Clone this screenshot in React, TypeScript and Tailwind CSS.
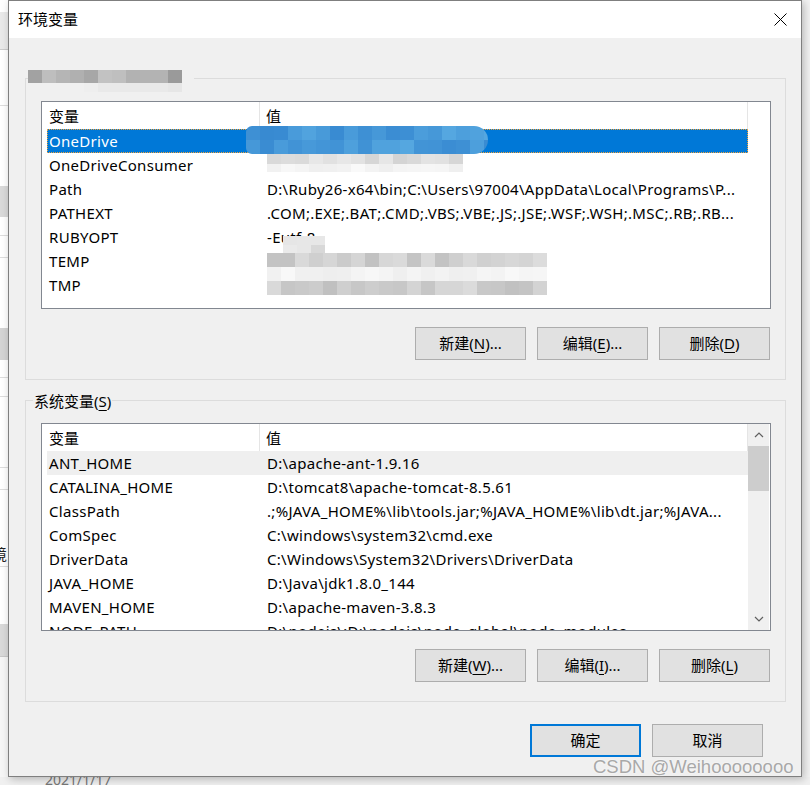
import type { ReactNode } from "react";

type Row = { name: string; value: string };

const userVars: Row[] = [
  { name: "OneDrive", value: "" },
  { name: "OneDriveConsumer", value: "" },
  { name: "Path", value: "D:\\Ruby26-x64\\bin;C:\\Users\\97004\\AppData\\Local\\Programs\\P..." },
  { name: "PATHEXT", value: ".COM;.EXE;.BAT;.CMD;.VBS;.VBE;.JS;.JSE;.WSF;.WSH;.MSC;.RB;.RB..." },
  { name: "RUBYOPT", value: "-Eutf-8" },
  { name: "TEMP", value: "" },
  { name: "TMP", value: "" },
];

const sysVars: Row[] = [
  { name: "ANT_HOME", value: "D:\\apache-ant-1.9.16" },
  { name: "CATALINA_HOME", value: "D:\\tomcat8\\apache-tomcat-8.5.61" },
  { name: "ClassPath", value: ".;%JAVA_HOME%\\lib\\tools.jar;%JAVA_HOME%\\lib\\dt.jar;%JAVA..." },
  { name: "ComSpec", value: "C:\\windows\\system32\\cmd.exe" },
  { name: "DriverData", value: "C:\\Windows\\System32\\Drivers\\DriverData" },
  { name: "JAVA_HOME", value: "D:\\Java\\jdk1.8.0_144" },
  { name: "MAVEN_HOME", value: "D:\\apache-maven-3.8.3" },
  { name: "NODE_PATH", value: "D:\\nodejs\\;D:\\nodejs\\node_global\\node_modules" },
];

// pseudo random 0..1 so the mosaic looks the same every run
const noise = (i: number, j: number) => {
  const n = Math.sin(i * 12.9898 + j * 78.233) * 43758.5453;
  return n - Math.floor(n);
};

const gray = (base: number, spread: number, i: number, j: number) => {
  const v = Math.round(base + (noise(i, j) - 0.5) * spread);
  return `rgb(${v},${v},${v})`;
};

const blue = (i: number, j: number) => {
  const d = Math.round((noise(i + 3, j + 7) - 0.5) * 30);
  return `rgb(${70 + d},${152 + d},${216 + Math.round(d / 2)})`;
};

type MosaicRow = { h: number; color: (i: number) => string };

function Mosaic({ rows, cols, className }: { rows: MosaicRow[]; cols: number; className?: string }) {
  return (
    <div className={"flex flex-col overflow-hidden " + (className ?? "")}>
      {rows.map((r, j) => (
        <div key={j} className="flex" style={{ height: r.h }}>
          {Array.from({ length: cols }).map((_, i) => (
            <div key={i} className="w-[14px] shrink-0 h-full" style={{ background: r.color(i) }} />
          ))}
        </div>
      ))}
    </div>
  );
}

function Btn({ children, primary }: { children: ReactNode; primary?: boolean }) {
  return (
    <div
      className={
        "w-[111px] h-[33px] bg-[#e1e1e1] flex items-center justify-center text-[15px] text-black " +
        (primary ? "border-2 border-[#0078d7]" : "border border-[#adadad]")
      }
    >
      {children}
    </div>
  );
}

const U = ({ c }: { c: string }) => <span className="underline underline-offset-[3px]">{c}</span>;

function Scrollbar() {
  return (
    <div className="w-[21px] h-full bg-[#f0f0f0] flex flex-col">
      <div className="h-[22px] flex items-center justify-center">
        <svg width="10" height="6" viewBox="0 0 10 6">
          <path d="M1 5 L5 1 L9 5" fill="none" stroke="#606060" strokeWidth="1.2" />
        </svg>
      </div>
      <div className="h-[45px] bg-[#cdcdcd]" />
      <div className="flex-1" />
      <div className="h-[22px] flex items-center justify-center">
        <svg width="10" height="6" viewBox="0 0 10 6">
          <path d="M1 1 L5 5 L9 1" fill="none" stroke="#606060" strokeWidth="1.2" />
        </svg>
      </div>
    </div>
  );
}

function VarList({
  rows,
  selected,
  hovered,
  scroll,
  children,
}: {
  rows: Row[];
  selected?: number;
  hovered?: number;
  scroll?: boolean;
  children?: ReactNode;
}) {
  return (
    <div className="relative h-[208px] border border-[#828790] bg-white flex overflow-hidden text-[15px] text-black">
      <div className="flex-1 min-w-0 pl-[5px] flex flex-col">
        <div className="h-[27px] shrink-0 flex">
          <div className="w-[213px] shrink-0 pl-[2px] pt-[1px] border-r border-[#e5e5e5] flex items-center">变量</div>
          <div className="flex-1 pl-[6px] pt-[1px] border-r border-[#e5e5e5] flex items-center">值</div>
        </div>
        {rows.map((r, i) => (
          <div
            key={r.name}
            className={
              "h-[24px] shrink-0 flex items-center whitespace-nowrap tracking-[0.3px] " +
              (i === selected
                ? "bg-[#0078d7] text-white outline-1 outline-dotted outline-[#f2a33a] -outline-offset-1"
                : i === hovered
                ? "bg-[#efefef]"
                : "")
            }
          >
            <div className="w-[213px] shrink-0 pl-[2px]">{r.name}</div>
            <div className="flex-1 min-w-0 pl-[7px] overflow-hidden">{r.value}</div>
          </div>
        ))}
      </div>
      <div className="w-[22px] shrink-0">{scroll && <Scrollbar />}</div>
      {children}
    </div>
  );
}

export default function App() {
  return (
    <div className="w-[810px] h-[785px] overflow-hidden bg-[#f2f2f2] flex flex-col font-['Noto_Sans','Noto_Sans_CJK_SC',sans-serif]">
      <div className="flex h-[777px] shrink-0">
        {/* window behind the dialog */}
        <div className="w-[8px] shrink-0 bg-white flex flex-col overflow-hidden">
          <div className="h-[12px] shrink-0" />
          <div className="h-[38px] shrink-0 bg-[#e9e9e9] border-b border-[#cccccc]" />
          <div className="h-[56px] shrink-0 border-b border-[#dddddd]" />
          <div className="h-[80px] shrink-0" />
          <div className="h-[31px] shrink-0 bg-[#d9d9d9]" />
          <div className="h-[19px] shrink-0 border-b border-[#dddddd]" />
          <div className="h-[22px] shrink-0 border-b border-[#dddddd]" />
          <div className="h-[70px] shrink-0" />
          <div className="h-[32px] shrink-0 bg-[#d4d4d4]" />
          <div className="h-[18px] shrink-0 border-b border-[#dddddd]" />
          <div className="h-[19px] shrink-0 border-b border-[#dddddd]" />
          <div className="h-[71px] shrink-0 border-b border-[#dddddd]" />
          <div className="h-[22px] shrink-0 border-b border-[#dddddd]" />
          <div className="h-[52px] shrink-0" />
          <div className="h-[25px] shrink-0 border-b border-[#dddddd] text-[15px] leading-[24px] -ml-[8px] text-[#222] whitespace-nowrap">
            境
          </div>
          <div className="h-[57px] shrink-0" />
          <div className="h-[33px] shrink-0 bg-[#d9d9d9] border-b border-[#c8c8c8]" />
          <div className="flex-1 bg-[#f6f6f6]" />
        </div>

        <div className="relative w-[794px] shrink-0 h-full border border-[#7f7f7f] bg-[#f0f0f0] flex flex-col shadow-[2px_2px_8px_rgba(0,0,0,0.25)]">
          {/* title bar */}
          <div className="h-[37px] shrink-0 bg-white flex items-center justify-between pl-[9px] pr-[14px]">
            <span className="text-[15px] text-black">环境变量</span>
            <svg width="13" height="13" viewBox="0 0 13 13">
              <path d="M0.5 0.5 L12.5 12.5 M12.5 0.5 L0.5 12.5" stroke="#000" strokeWidth="1" />
            </svg>
          </div>

          <div className="flex-1 pt-[40px] pl-[16px] pr-[15px] flex flex-col">
            {/* user variables */}
            <div className="relative border border-[#dcdcdc] pt-[22px] pl-[15px] pr-[14px] pb-[19px]">
              <Mosaic
                className="absolute left-[2px] -top-[9px] bg-[#f0f0f0] pr-[12px]"
                cols={11}
                rows={[
                  { h: 13, color: (i) => gray(178, 50, i, 1) },
                  { h: 9, color: (i) => (i < 4 ? "#f0f0f0" : gray(232, 14, i, 2)) },
                ]}
              />
              <VarList rows={userVars} selected={0}>
                {/* blurred values */}
                <div className="absolute left-[204px] top-[24px] w-[242px] h-[28px] rounded-r-[14px] rounded-l-[6px] overflow-hidden">
                  <Mosaic
                    cols={18}
                    rows={[
                      { h: 14, color: (i) => blue(i, 1) },
                      { h: 14, color: (i) => blue(i, 2) },
                    ]}
                  />
                </div>
                <Mosaic
                  className="absolute left-[225px] top-[52px] w-[196px]"
                  cols={14}
                  rows={[
                    { h: 10, color: (i) => gray(222, 22, i, 3) },
                    { h: 8, color: (i) => gray(244, 10, i, 4) },
                  ]}
                />
                <Mosaic
                  className="absolute left-[241px] top-[134px] w-[42px]"
                  cols={3}
                  rows={[
                    { h: 9, color: (i) => gray(236, 14, i, 5) },
                    { h: 8, color: (i) => gray(225, 20, i, 6) },
                  ]}
                />
                <Mosaic
                  className="absolute left-[225px] top-[151px] w-[280px]"
                  cols={20}
                  rows={[
                    { h: 14, color: (i) => gray(206, 28, i, 7) },
                    { h: 14, color: (i) => gray(243, 10, i, 8) },
                    { h: 14, color: (i) => gray(204, 30, i, 9) },
                  ]}
                />
              </VarList>
              <div className="mt-[18px] flex justify-end gap-[11px] pr-[1px]">
                <Btn>
                  新建(<U c="N" />)...
                </Btn>
                <Btn>
                  编辑(<U c="E" />)...
                </Btn>
                <Btn>
                  删除(<U c="D" />)
                </Btn>
              </div>
            </div>

            {/* system variables */}
            <div className="relative mt-[20px] border border-[#dcdcdc] pt-[22px] pl-[15px] pr-[14px] pb-[19px]">
              <div className="absolute left-[7px] -top-[11px] px-[1px] bg-[#f0f0f0] text-[15px] leading-[22px] text-black">
                系统变量(<U c="S" />)
              </div>
              <VarList rows={sysVars} hovered={0} scroll />
              <div className="mt-[18px] flex justify-end gap-[11px] pr-[1px]">
                <Btn>
                  新建(<U c="W" />)...
                </Btn>
                <Btn>
                  编辑(<U c="I" />)...
                </Btn>
                <Btn>
                  删除(<U c="L" />)
                </Btn>
              </div>
            </div>

            <div className="mt-[22px] flex justify-end gap-[11px] pr-[23px]">
              <Btn primary>确定</Btn>
              <Btn>取消</Btn>
            </div>
          </div>

          {/* watermark */}
          <div className="absolute left-[584px] top-[755px] text-[18.5px] leading-[22px] text-[#a8a8a8] font-['Liberation_Sans',sans-serif] [text-shadow:0_0_2px_#ffffff]">
            CSDN @Weihoooooooo
          </div>
        </div>

        <div className="flex-1 bg-[#f3f3f3]" />
      </div>
      <div className="h-[8px] overflow-hidden bg-[#f0f0f0] pl-[45px]">
        <div className="text-[14px] leading-[14px] -mt-[4px] text-[#777]">2021/1/17</div>
      </div>
    </div>
  );
}
